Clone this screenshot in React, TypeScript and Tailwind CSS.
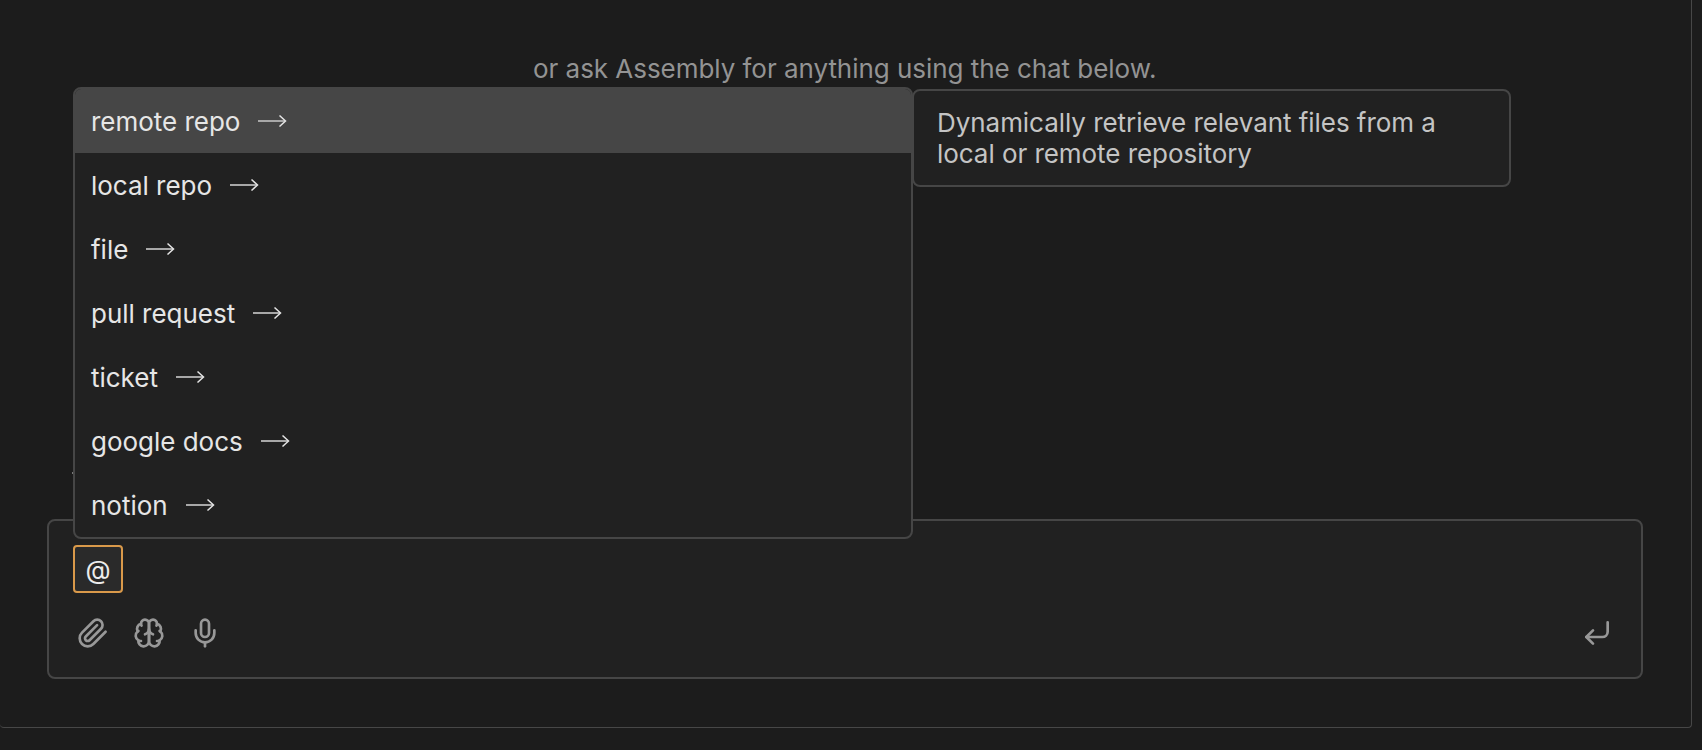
import { Mic, CornerDownLeft } from "lucide-react";

const items = ["remote repo", "local repo", "file", "pull request", "ticket", "google docs", "notion"];

function LongArrow() {
  return (
    <svg width="30" height="14" viewBox="0 0 30 14" fill="none" stroke="#e4e4e4">
      <path d="M1 7H28" stroke="#a8a8a8" strokeWidth="2" />
      <path d="M22.5 1.5L28.5 7L22.5 12.5" strokeWidth="1.5" />
    </svg>
  );
}

function PaperclipIcon() {
  return (
    <svg width="32" height="32" viewBox="0 0 24 24" fill="none" stroke="currentColor" strokeWidth="2" strokeLinecap="round" strokeLinejoin="round">
      <path d="m21.44 11.05-9.19 9.19a6 6 0 0 1-8.49-8.49l8.57-8.57A4 4 0 1 1 18 8.84l-8.59 8.57a2 2 0 0 1-2.83-2.83l8.49-8.48" />
    </svg>
  );
}

function BrainIcon() {
  return (
    <svg width="32" height="32" viewBox="0 0 24 24" fill="none" stroke="currentColor" strokeWidth="2" strokeLinecap="round" strokeLinejoin="round">
      <path d="M12 5a3 3 0 1 0-5.997.125 4 4 0 0 0-2.526 5.77 4 4 0 0 0 .556 6.588A4 4 0 1 0 12 18Z" />
      <path d="M12 5a3 3 0 1 1 5.997.125 4 4 0 0 1 2.526 5.77 4 4 0 0 1-.556 6.588A4 4 0 1 1 12 18Z" />
      <path d="M15 13a4.5 4.5 0 0 1-3-4 4.5 4.5 0 0 1-3 4" />
      <path d="M17.599 6.5a3 3 0 0 0 .399-1.375" />
      <path d="M6.003 5.125A3 3 0 0 0 6.401 6.5" />
      <path d="M3.477 10.896a4 4 0 0 1 .585-.396" />
      <path d="M19.938 10.5a4 4 0 0 1 .585.396" />
      <path d="M6 18a4 4 0 0 1-1.967-.516" />
      <path d="M19.967 17.484A4 4 0 0 1 18 18" />
    </svg>
  );
}

export default function App() {
  return (
    <div className="h-[750px] w-[1702px] overflow-hidden bg-[#1c1c1c] font-['Inter',sans-serif] text-[26px] font-normal [font-optical-sizing:none]">
      <div className="relative flex h-[728px] w-[1692px] flex-col rounded-b-[4px] border-r border-b border-[#474747]">
        <p className="mt-[53px] ml-[533px] h-8 leading-8 tracking-[-0.04px] whitespace-nowrap text-[#939393]">
          or ask Assembly for anything using the chat below.
        </p>
        <section className="mt-auto mb-12 ml-[47px] flex h-40 w-[1596px] flex-col rounded-lg border-2 border-[#464646] bg-[#212121] px-6 pt-6">
          <div className="flex h-12 w-[50px] items-center justify-center rounded-[4px] border-2 border-[#d9994a] bg-[#2a2a2a] text-[#ececec]">
            @
          </div>
          <div className="mt-6 flex h-8 items-center gap-6 pl-1 text-[#989898]">
            <PaperclipIcon />
            <BrainIcon />
            <Mic size={32} />
            <CornerDownLeft size={32} className="mr-1 ml-auto" />
          </div>
        </section>
        <span className="absolute top-[472px] left-[72px] h-[2px] w-px bg-[#777777]" />
        <div className="absolute top-[87px] left-[73px] flex items-start">
          <ul className="w-[840px] overflow-hidden rounded-lg border-2 border-[#464646] bg-[#212121] text-[#e6e6e6]">
            {items.map((item, i) => (
              <li
                key={item}
                className={`flex h-16 items-center gap-[17px] pl-4 leading-8 tracking-[-0.02px] ${i === 0 ? "bg-[#464646]" : ""}`}
              >
                <span className="pt-0.5">{item}</span>
                <LongArrow />
              </li>
            ))}
          </ul>
          <div className="mt-0.5 h-[98px] w-[599px] -ml-px rounded-lg border-2 border-[#464646] bg-[#212121] pr-6 pl-[23px] pt-4 leading-[31px] tracking-[-0.05px] text-[#c4c4c4]">
            Dynamically retrieve relevant files from a
            <br />
            local or remote repository
          </div>
        </div>
      </div>
    </div>
  );
}
